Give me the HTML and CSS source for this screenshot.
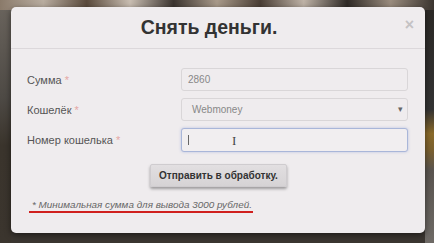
FILE: index.html
```html
<!DOCTYPE html>
<html lang="ru">
<head>
<meta charset="utf-8">
<link rel="stylesheet" href="styles.css">
</head>
<body>
<div class="backdrop">
  <div class="modal">
    <div class="modal-header">
      <h1 class="title">Снять деньги.</h1>
      <span class="close">×</span>
    </div>
    <div class="modal-body">
      <div class="row">
        <label class="label">Сумма <span class="req">*</span></label>
        <div class="field">2860</div>
      </div>
      <div class="row">
        <label class="label">Кошелёк <span class="req">*</span></label>
        <div class="field select">Webmoney<span class="caret">▾</span></div>
      </div>
      <div class="row">
        <label class="label">Номер кошелька <span class="req">*</span></label>
        <div class="field focus"><span class="text-cursor"></span><span class="ibeam">I</span></div>
      </div>
      <div class="actions">
        <button class="btn">Отправить в обработку.</button>
      </div>
      <p class="note">* Минимальная сумма для вывода 3000 рублей.</p>
    </div>
  </div>
</div>
</body>
</html>
```
FILE: styles.css
```css
html, body {
  margin: 0;
  padding: 0;
}
body {
  width: 434px;
  height: 243px;
  overflow: hidden;
  font-family: "Liberation Sans", Arial, sans-serif;
  background: #3b3631;
}
.backdrop {
  height: 243px;
  box-sizing: border-box;
  padding: 7px 9px 10px 11px;
  background:
    linear-gradient(90deg, #8a7a6a 0%, #b9ada0 10%, #5a4a3c 20%, #c9beb2 30%, #3c3530 40%, #a99a8a 50%, #4a3e35 60%, #bfb3a7 70%, #2f2a26 80%, #9a8c7e 90%, #3a342f 100%) top / 100% 10px no-repeat,
    linear-gradient(180deg, #6b655e 0%, #4e4a45 40%, #3a342c 60%, #3b352e 100%) left / 11px 100% no-repeat,
    linear-gradient(180deg, #2b2825 0%, #333 45%, #8a6a2a 55%, #7a6030 62%, #5a5550 70%, #6e6a66 100%) right / 9px 100% no-repeat,
    #3b3631;
}
.modal {
  height: 226px;
  background: #efecee;
  border-radius: 5px;
  box-shadow: 0 2px 6px rgba(0,0,0,0.5);
  display: flex;
  flex-direction: column;
}
.modal-header {
  height: 41px;
  border-bottom: 1px solid #dcd8db;
  display: flex;
  align-items: center;
  justify-content: center;
  position: relative;
}
.title {
  margin: 0;
  font-size: 19.5px;
  font-weight: bold;
  color: #333;
  padding-right: 18px;
}
.close {
  position: absolute;
  right: 11px;
  top: 9px;
  font-size: 16px;
  font-weight: bold;
  color: #c4c2c4;
}
.modal-body {
  padding: 19px 17px 0 16px;
}
.row {
  display: flex;
  align-items: center;
  height: 23px;
  margin-bottom: 7px;
}
.label {
  width: 154px;
  font-size: 11px;
  color: #555;
}
.req {
  color: #e5a7a3;
}
.field {
  flex: 1;
  height: 23px;
  box-sizing: border-box;
  border: 1px solid #d9d6d8;
  border-radius: 3px;
  background: #efecee;
  font-size: 10px;
  color: #888;
  padding: 0 6px;
  display: flex;
  align-items: center;
  position: relative;
}
.select {
  padding-left: 10px;
}
.caret {
  position: absolute;
  right: 4px;
  top: 5px;
  font-size: 9px;
  color: #666;
}
.focus {
  height: 24px;
  border-color: #a9b6d9;
  box-shadow: 0 0 3px rgba(120,140,210,0.45);
  background: #f1eef0;
}
.text-cursor {
  display: block;
  width: 1px;
  height: 10px;
  background: #666;
}
.ibeam {
  position: absolute;
  left: 50px;
  top: 4px;
  font-family: "Liberation Serif", serif;
  font-size: 13px;
  color: #444;
}
.actions {
  display: flex;
  justify-content: center;
  padding-top: 6px;
}
.btn {
  width: 137px;
  height: 23px;
  border: 1px solid #cfcccf;
  border-radius: 2px;
  background: linear-gradient(#e2dfe1, #d6d3d5);
  box-shadow: 0 2px 3px rgba(0,0,0,0.35);
  font-family: "Liberation Sans", Arial, sans-serif;
  font-size: 10px;
  font-weight: bold;
  color: #333;
  padding: 0;
  margin-left: 2px;
}
.note {
  margin: 12px 0 0 2px;
  display: inline-block;
  font-size: 9.9px;
  font-style: italic;
  color: #666;
  padding: 0 1px 1px 3px;
  border-bottom: 2px solid #d0201e;
}
```
